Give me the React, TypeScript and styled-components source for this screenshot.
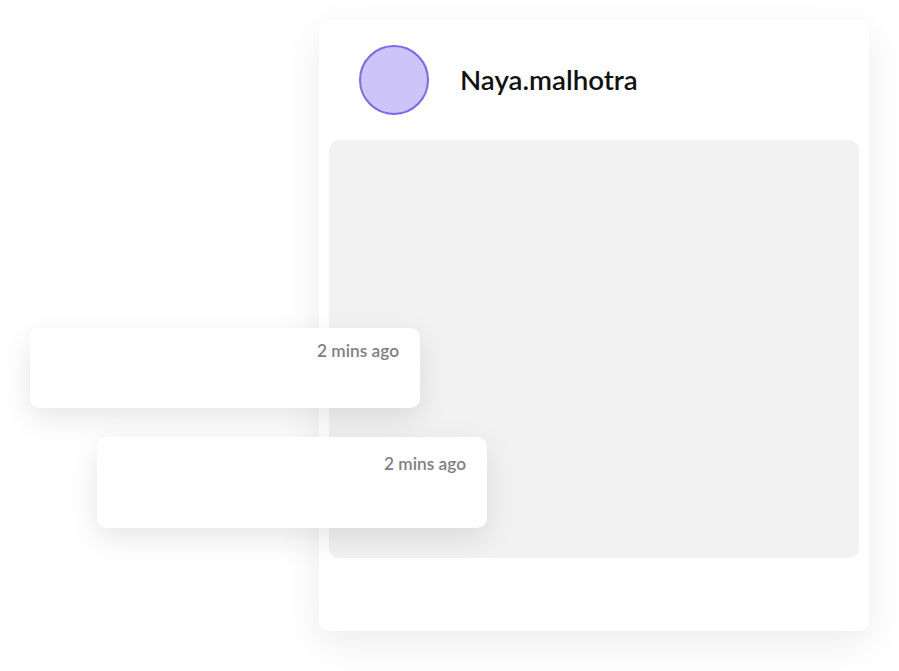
import React from "react";
import styled, { createGlobalStyle } from "styled-components";

const Global = createGlobalStyle`
  html, body { margin: 0; padding: 0; background: #ffffff; }
  body { font-family: "Source Sans Pro", Lato, "Noto Sans", sans-serif; }
`;

const Stage = styled.div`
  position: relative;
  width: 899px;
  height: 671px;
  overflow: hidden;
  padding: 20px 0 0 319px;
  box-sizing: border-box;
`;

const PostCard = styled.div`
  width: 550px;
  height: 611px;
  background: #ffffff;
  border-radius: 10px;
  box-shadow: 0 12px 40px rgba(0, 0, 0, 0.08);
  display: flex;
  flex-direction: column;
  padding: 0 10px;
  box-sizing: border-box;
`;

const Header = styled.div`
  height: 120px;
  display: flex;
  align-items: center;
  gap: 31px;
  padding-left: 30px;
`;

const Avatar = styled.div`
  width: 66px;
  height: 66px;
  border-radius: 50%;
  background: #cdc4f7;
  border: 2px solid #7b68ee;
`;

const Name = styled.div`
  font-size: 27.7px;
  font-weight: 600;
  color: #111111;
  margin-top: -2px;
`;

const Media = styled.div`
  height: 418px;
  background: #f2f2f2;
  border-radius: 10px;
`;

const Notice = styled.div<{ $left: number; $top: number; $h: number; $pt: number }>`
  position: absolute;
  left: ${(p) => p.$left}px;
  top: ${(p) => p.$top}px;
  width: 390px;
  height: ${(p) => p.$h}px;
  background: #ffffff;
  border-radius: 10px;
  box-shadow: 0 10px 30px rgba(0, 0, 0, 0.1);
  display: flex;
  justify-content: flex-end;
  align-items: flex-start;
  padding: ${(p) => p.$pt}px 21px 0 0;
  box-sizing: border-box;
`;

const Time = styled.span`
  font-size: 17.3px;
  font-weight: 600;
  color: #808080;
  line-height: 20px;
`;

export default function App() {
  return (
    <>
      <Global />
      <Stage>
        <PostCard>
          <Header>
            <Avatar />
            <Name>Naya.malhotra</Name>
          </Header>
          <Media />
        </PostCard>
        <Notice $left={30} $top={328} $h={80} $pt={13}>
          <Time>2 mins ago</Time>
        </Notice>
        <Notice $left={97} $top={437} $h={91} $pt={17}>
          <Time>2 mins ago</Time>
        </Notice>
      </Stage>
    </>
  );
}
